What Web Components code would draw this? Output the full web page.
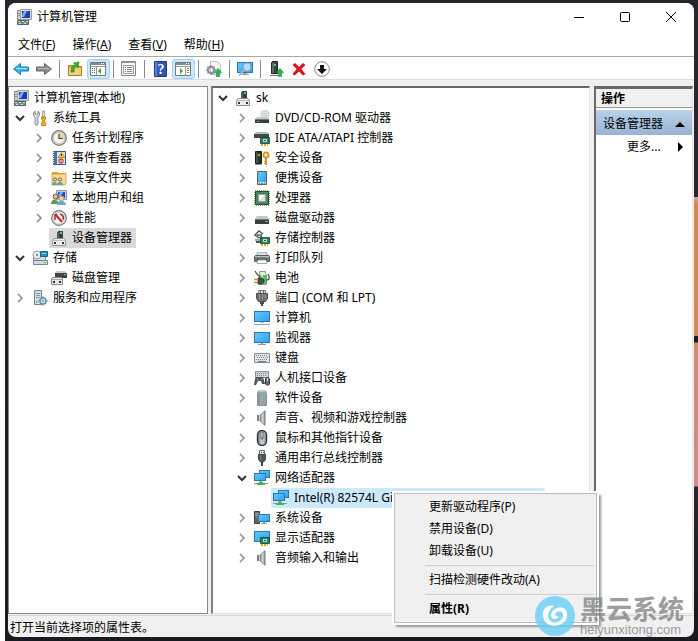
<!DOCTYPE html>
<html lang="zh-CN">
<head>
<meta charset="utf-8">
<title>计算机管理</title>
<style>
    html, body { height: 100%; }
    body {
        margin: 0;
        box-sizing: border-box;
        padding: 0 0 0 5px;
        display: flex;
        background: #fff;
        color: #000;
        font: 12px/20px "Noto Sans", "Noto Sans CJK SC", sans-serif;
    }
</style>
</head>
<body>
<mmc-desktop>
    <mmc-window heading="计算机管理">
        <mmc-menubar slot="menu"></mmc-menubar>
        <mmc-toolbar slot="tools"></mmc-toolbar>

        <mmc-pane slot="left" kind="line">
            <mmc-node icon="console" label="计算机管理(本地)" root></mmc-node>
            <mmc-node icon="tools" label="系统工具" state="open">
                <mmc-node icon="clock" label="任务计划程序" state="closed"></mmc-node>
                <mmc-node icon="events" label="事件查看器" state="closed"></mmc-node>
                <mmc-node icon="shared" label="共享文件夹" state="closed"></mmc-node>
                <mmc-node icon="users" label="本地用户和组" state="closed"></mmc-node>
                <mmc-node icon="perf" label="性能" state="closed"></mmc-node>
                <mmc-node icon="device" label="设备管理器" selected="grey"></mmc-node>
            </mmc-node>
            <mmc-node icon="storage" label="存储" state="open">
                <mmc-node icon="diskmgmt" label="磁盘管理"></mmc-node>
            </mmc-node>
            <mmc-node icon="services" label="服务和应用程序" state="closed"></mmc-node>
        </mmc-pane>

        <mmc-pane slot="center" kind="sunken">
            <mmc-node icon="device" label="sk" state="open">
                <mmc-node icon="dvd" label="DVD/CD-ROM 驱动器" state="closed"></mmc-node>
                <mmc-node icon="ide" label="IDE ATA/ATAPI 控制器" state="closed"></mmc-node>
                <mmc-node icon="security" label="安全设备" state="closed"></mmc-node>
                <mmc-node icon="portable" label="便携设备" state="closed"></mmc-node>
                <mmc-node icon="cpu" label="处理器" state="closed"></mmc-node>
                <mmc-node icon="disk" label="磁盘驱动器" state="closed"></mmc-node>
                <mmc-node icon="storagectl" label="存储控制器" state="closed"></mmc-node>
                <mmc-node icon="printer" label="打印队列" state="closed"></mmc-node>
                <mmc-node icon="battery" label="电池" state="closed"></mmc-node>
                <mmc-node icon="port" label="端口 (COM 和 LPT)" state="closed"></mmc-node>
                <mmc-node icon="computer" label="计算机" state="closed"></mmc-node>
                <mmc-node icon="monitor" label="监视器" state="closed"></mmc-node>
                <mmc-node icon="keyboard" label="键盘" state="closed"></mmc-node>
                <mmc-node icon="hid" label="人机接口设备" state="closed"></mmc-node>
                <mmc-node icon="software" label="软件设备" state="closed"></mmc-node>
                <mmc-node icon="speaker" label="声音、视频和游戏控制器" state="closed"></mmc-node>
                <mmc-node icon="mouse" label="鼠标和其他指针设备" state="closed"></mmc-node>
                <mmc-node icon="usb" label="通用串行总线控制器" state="closed"></mmc-node>
                <mmc-node icon="network" label="网络适配器" state="open">
                    <mmc-node icon="network" label="Intel(R) 82574L Gigabit Network Connection" selected="blue"></mmc-node>
                </mmc-node>
                <mmc-node icon="system" label="系统设备" state="closed"></mmc-node>
                <mmc-node icon="display" label="显示适配器" state="closed"></mmc-node>
                <mmc-node icon="speaker" label="音频输入和输出" state="closed"></mmc-node>
            </mmc-node>
        </mmc-pane>

        <mmc-actions slot="right" heading="操作" group="设备管理器">更多...</mmc-actions>
        <span slot="status">打开当前选择项的属性表。</span>

        <mmc-context-menu slot="overlay">
            <button type="button">更新驱动程序(P)</button>
            <button type="button">禁用设备(D)</button>
            <button type="button">卸载设备(U)</button>
            <hr>
            <button type="button">扫描检测硬件改动(A)</button>
            <hr>
            <button type="button"><b>属性(R)</b></button>
        </mmc-context-menu>
    </mmc-window>
    <mmc-watermark site="heiyunxitong.com">黑云系统</mmc-watermark>
</mmc-desktop>

<script>
// shared pieces, reused by several icons
const board = `<path fill="#2f8062" stroke="#0d4a33" stroke-width=".8" d="M6.500 7.500h9v6h-9z"/><path fill="#b9dccb" d="M9 9h4v3H9z"/><path fill="#2a4d40" d="M10 10h2v1h-2z"/><path fill="#e8a11c" d="M7 14h2v2H7zM10 14h2v2h-2zM13 14h1v2h-1z"/>`;
const screen = (x, y, w, h) => `<rect x="${x}.5" y="${y}.5" width="${w}" height="${h}" fill="url(#blue)" stroke="#2c78ad"/>`;
const gear = (x, y) => `<g transform="translate(${x} ${y})"><circle r="3" fill="none" stroke="#8a8f93" stroke-width="2"/><path stroke="#8a8f93" stroke-width="1.5" d="M0-5v2M0 5V3M-5 0h2M5 0H3M-3.500-3.500l1 1M3.500 3.500l-1-1M-3.500 3.500l1-1M3.500-3.500l-1 1"/></g>`;
const upArrow = `<path fill="#21b84c" stroke="#0c8a32" stroke-width=".6" d="M12 7.500l3.500 4h-2v4h-3v-4h-2z"/>`;
const paneFrame = `<path fill="#fff" stroke="#777" d="M.5 1.500h15v13H.5z"/><path fill="#8a8a8a" d="M1 2h14v2H1z"/><path fill="#fff" d="M11 2h1v1h-1zM13 2h1v1h-1z"/><path stroke="#999" d="M1 5.500h14"/>`;

const ICONS = {
    console: `<path fill="#d6d6d1" stroke="#85857e" d="M1.500 1.500h4v9h-4z"/><path stroke="#999" d="M2 4.500h3M2 6.500h3"/><path fill="#d9dad6" stroke="#a0a09b" d="M4.500.5h11v10h-11z"/><path fill="#1740b8" d="M6 2h8v7H6z"/><path fill="#7da7f4" d="M8 2h3L8 8H6V6z"/><path fill="#aab2b8" d="M8 11h5l1 1H7z"/><path fill="#7b8a93" stroke="#55626a" d="M1.500 11.500h11v4h-11z"/><path fill="#d5dde1" d="M2 12h2v1H2zM6 12h2v1H6zM10 12h2v1h-2zM3 14h2v1H3zM8 14h2v1H8z"/>`,
    tools: `<path fill="#d7dadc" stroke="#777" stroke-width=".8" d="M3 1L1.500 3v2.500L3 7v7c0 1.500 3 1.500 3 0V7l1.500-1.500V3L6 1v3H3z"/><path fill="#ddd" stroke="#888" stroke-width=".7" d="M10.500 1h2v6h-2z"/><path fill="#f4ad13" stroke="#aa6d08" stroke-width=".7" d="M9.500 7h4v2l-.8 1v2l1 1v2.500h-4.200V13l1-1v-2l-1-1z"/>`,
    clock: `<circle cx="8" cy="8" r="7.300" fill="#ddd6c7" stroke="#777" stroke-width="1.200"/><circle cx="8" cy="8" r="5.500" fill="#f8f5ea" stroke="#aaa" stroke-width=".5"/><path fill="#e9cf90" d="M8 8V3a5 5 0 0 1 5 5z"/><path fill="none" stroke="#3a4657" stroke-width="1.200" d="M8 4v4.500h4"/>`,
    events: `<path fill="#d9e4ee" stroke="#3c5d83" d="M2.500 1.500h12v13h-12z"/><path fill="#4777a4" d="M3 2h3v12H3z"/><path stroke="#eee" stroke-width="2" stroke-dasharray="1 1" d="M2 2v12"/><path fill="#fbc52f" stroke="#b07d05" stroke-width=".7" d="M10.500 2.500l3.500 5H7z"/><path stroke="#333" d="M10.500 4v2"/><circle cx="10" cy="11" r="2.700" fill="#d84745"/><path stroke="#fff" d="M8.500 11h3"/>`,
    shared: `<path fill="#d9a33a" d="M1 2h6l1 1h7v11H1z"/><path fill="#f6da8f" stroke="#c19337" stroke-width=".7" d="M1 4h11l3-1v11l-2 1H1z"/><path fill="#4ba8ac" d="M1 15c0-4 5-4 5 0zM6 15c0-4 6-4 6 0z"/><circle cx="4" cy="9.500" r="1.600" fill="#f1ddbb" stroke="#68482b" stroke-width=".8"/><circle cx="9" cy="9.500" r="1.600" fill="#f1ddbb" stroke="#68482b" stroke-width=".8"/>`,
    users: `<path fill="#c7ced7" stroke="#8e99a8" d="M5.500.5h10v9h-10z"/><path fill="#2352c4" d="M7 2h7v6H7z"/><path fill="#82aef6" d="M9 2h3L9 7H7z"/><path fill="#5d9a54" d="M0 14c0-6 7-6 8 0z"/><path fill="#6ba5df" d="M6 15c0-6 8-6 9 0z"/><circle cx="4.500" cy="6.500" r="2.400" fill="#e5c19a" stroke="#725035"/><circle cx="10.500" cy="8.500" r="2.400" fill="#edcfad" stroke="#c1a44f"/>`,
    perf: `<circle cx="8" cy="8" r="7.300" fill="#eee" stroke="#777" stroke-width="1.200"/><circle cx="8" cy="8" r="5.500" fill="#fff" stroke="#bbb" stroke-width=".5"/><path fill="none" stroke="#b6262b" stroke-width="2" d="M4.500 4.500L11 12"/><path fill="none" stroke="#b6262b" stroke-width="1.500" d="M4 10V5l2-1M9 4c3 1 4 3 3 6"/>`,
    device: `<path fill="#3b3f40" d="M7 1h5v7H7zM6 2h1v6H6z"/><path fill="#575c5e" d="M6 2h2v6H6z"/><path fill="#3de550" d="M9 2h2v2H9z"/><path fill="#eceded" stroke="#8f9496" d="M1.500 10.500L3 8.500h10l1.500 2v5h-13z"/><path fill="#bfc3c4" d="M2 10h12v1H2z"/><path fill="#333" d="M3 12h2v2H3zM11 12h2v2h-2z"/>`,
    storage: `<path fill="#d8dddf" stroke="#808a8f" d="M1.500 3.500h12v11h-12z"/><circle cx="5" cy="5" r="4" fill="#e9ecee" stroke="#949fa5"/><circle cx="5" cy="5" r="1.200" fill="#839198"/><path fill="#2d91bf" stroke="#16678e" d="M8.500 1.500h7v5h-7z"/><path fill="#86d5ed" d="M10 3h4v1h-4z"/><path fill="#d3d8da" stroke="#7d878c" d="M1.500 10.500h14v4h-14z"/><path fill="#32cf42" d="M12 12h2v1h-2z"/>`,
    diskmgmt: `<path fill="#c9cccd" d="M6 1h8l2 2H4z"/><path fill="#424546" d="M4 3h12v5H4z"/><path fill="#37dd4c" d="M13 4h2v1h-2z"/><path fill="#e6e8e8" stroke="#84898b" d="M.5 8.500L2 7.500h8l1.500 1v6H.5z"/><path stroke="#aaa" d="M1 9.500h10"/><path fill="#333" d="M2 11h2v2H2zM8 11h2v2H8z"/>`,
    services: `<path fill="#d5dde2" stroke="#738591" d="M2.500.5h7v14h-7z"/><path fill="#8598a4" d="M4 3h4v1H4zM4 5h4v1H4zM4 7h4v1H4z"/><path fill="#3cbd50" d="M4 11h1v2H4z"/><g transform="translate(11 11)"><circle r="3" fill="#e0eef9" stroke="#668ba8" stroke-width="1.500"/><path stroke="#668ba8" d="M0-5v2M0 5V3M-5 0h2M5 0H3M-3-3l1 1M3 3L2 2M-3 3l1-1M3-3L2-2"/><circle r="1" fill="#668ba8"/></g>`,
    dvd: `<circle cx="11" cy="4.500" r="4" fill="#dce3e8" stroke="#b6c0c7" stroke-width=".8"/><circle cx="11" cy="4.500" r="1.200" fill="#fff" stroke="#9ea8ad" stroke-width=".6"/><path fill="#c3c7c9" d="M3 7h10l2 2H1z"/><path fill="#393c3e" d="M1 9h14v4H1z"/><path fill="#777" d="M1 9h14v1H1z"/><path fill="#38e04a" d="M3 11h2v1H3z"/>`,
    ide: `<path fill="#b6babd" d="M2 2h11l2 2H0z"/><path fill="#45494a" d="M0 4h15v4H0z"/>${board}`,
    security: `<path fill="#303334" stroke="#191b1c" d="M1.500 1.500h6v12h-6z"/><path fill="#4c5051" d="M2 2h2v11H2z"/><path fill="#43e954" d="M4 4h2v2H4z"/><path fill="#9da0a1" d="M1 14h7v1H1z"/><circle cx="12" cy="5" r="2.600" fill="#fff1ba" stroke="#d79224" stroke-width="1.800"/><path stroke="#d79224" stroke-width="2" d="M12 8v7"/><path stroke="#d79224" d="M10 11.500h2M10 13.500h2"/>`,
    portable: `<path fill="#cbd1d5" stroke="#566069" d="M3.500 1.500h9v13h-9z"/><path fill="url(#blue)" d="M4 2h8v10H4z"/><path fill="#70777b" d="M5 13h1v1H5zM7 13h2v1H7zM10 13h1v1h-1z"/>`,
    cpu: `<path fill="none" stroke="#b29b4d" stroke-width="2" stroke-dasharray="1 1" d="M1 1h14v14H1z"/><path fill="#4c8068" stroke="#1c5740" d="M1.500 1.500h13v13h-13z"/><path fill="#dae0dd" stroke="#8fa69b" d="M4.500 4.500h7v7h-7z"/><path fill="#f3f6f4" d="M5 5h6L5 11z"/>`,
    disk: `<path fill="#c3c7c9" d="M3 6h10l2 3H1z"/><path fill="#3a3d3f" d="M1 9h14v5H1z"/><path fill="#777" d="M1 9h14v1H1z"/><path fill="#38e04a" d="M11 11h3v1h-3z"/>`,
    storagectl: `<path fill="none" stroke="#555" stroke-width="1.400" d="M9 4L5 1 1 5l4 3 3-2M3 5h5"/><path fill="#aaa" d="M1 9h6v2H1z"/><path fill="#555" d="M2 11h6v2H2z"/>${board}`,
    printer: `<path fill="#b0b9bf" d="M3 2h10l1 4H2z"/><path fill="#d9dfe3" d="M4 3h8v2H4z"/><path fill="#70787d" stroke="#565d61" d="M1.500 5.500h13a1 1 0 0 1 1 1v5H.5v-5z"/><path fill="#b9c2c7" d="M1 6h14v1H1z"/><path fill="#36d94a" d="M12 7h2v1h-2z"/><path fill="#303437" d="M3 9h10v2H3z"/><path fill="#fff" stroke="#9caab3" d="M4 10h8l1 3.500H3z"/>`,
    battery: `<path fill="#e8ece7" stroke="#8a9b8d" d="M5.500 3.500V1.500h6v2l1 1v10h-7z"/><path fill="#52c84a" d="M6 5h6v9H6z"/><path fill="#a5eb94" d="M7 5h2v9H7z"/><path fill="none" stroke="#555" stroke-width="1.300" d="M1 1l2 3 3 3M12 10c5 0 3-4 2-6"/><path fill="#4f5253" stroke="#272a2a" stroke-width=".8" d="M4 8h4l2 2v2l-2 2H4z"/><path stroke="#cd9b31" stroke-width="1.500" d="M0 9.500h4M0 12.500h4"/>`,
    port: `<path fill="#dadddd" stroke="#787c7e" d="M4.500 1.500v-1h7v3h-7z"/><path stroke="#777" d="M6.500 0v3M9.500 0v3"/><path fill="#6d7173" stroke="#494d4f" d="M2.500 3.500h11v5l-2 3h-7l-2-3z"/><path stroke="#999" d="M5.500 4v5M8.500 4v5M11.500 4v4"/><path fill="#4b4f51" d="M6 12h4v2H9v2H7v-2H6z"/>`,
    computer: `${screen(0, 1, 15, 10)}<path fill="#b7c6ce" d="M6 12h4v1H6z"/><path fill="#8fa6b2" d="M0 14h16v1H0z"/>`,
    monitor: `${screen(0, 2, 15, 10)}<path fill="#8297a3" d="M7 13h2v1h3v1H4v-1h3z"/>`,
    keyboard: `<path fill="#e1e5e7" stroke="#858e93" d="M.5 3.500h15v9H.5z"/><path stroke="#7b858b" stroke-dasharray="1 1" d="M2 5.500h12M3 7.500h11M2 9.500h12"/><path stroke="#777" d="M4 11.500h8"/>`,
    hid: `<path fill="#d1d5d7" stroke="#899195" d="M1.500 1.500h13v6h-13z"/><path stroke="#7c8489" stroke-dasharray="1 1" d="M3 3.500h10M3 5.500h10"/><path fill="#4b5154" d="M2 7h7l2 7H8l-1-3H4l-2 4H0l1-6z"/><circle cx="3.500" cy="9.500" r="1" fill="#5db6e8"/><circle cx="7.500" cy="9.500" r="1" fill="#ec633c"/><path fill="#6b7174" stroke="#363b3e" d="M11.500 9l1-1.500h2l1 1.500v5l-1 1h-2l-1-1z"/><path stroke="#ddd" d="M13.500 8v3"/>`,
    software: `<path fill="#9aa3a8" stroke="#868f95" d="M3.500 3.500l1-2.500h7l1 2.500v12h-9z"/><path fill="#c5cbce" d="M5 1h6v1H5z"/><path fill="#8b959b" d="M4 4h2v11H4z"/><path fill="#42c8e5" d="M8 5h2v2H8z"/>`,
    speaker: `<path fill="#777c80" d="M3 5h2v6H3z"/><path fill="url(#metal)" stroke="#7b8084" stroke-width=".7" d="M6 5l5-4.500v15L6 11z"/><path fill="#b4b9bc" d="M11 1h1v14h-1z"/>`,
    mouse: `<rect x="3.500" y=".5" width="9" height="15" rx="4.500" fill="url(#metal)" stroke="#30363a" stroke-width="1.400"/><path fill="#fff" stroke="#3e474d" stroke-width=".8" d="M7 2h2v6H7z"/><path stroke="#4c545a" d="M8 8v2"/>`,
    usb: `<path fill="#e0e2e2" stroke="#696f72" d="M5.500.5h5v4h-5z"/><path fill="#555" d="M7 2h1v1H7zM9 2h1v1H9z"/><path fill="#505557" stroke="#3b4042" d="M4.500 4.500h7v5l-2 2.500h-3l-2-2.500z"/><path stroke="#7b8285" d="M6.500 5v5"/><path fill="#404548" d="M7 12h2v4H7z"/>`,
    network: `${screen(5, 0, 10, 7)}${screen(0, 3, 11, 7)}<path fill="#9fb2bd" d="M5 11h3v1H5z"/><path fill="#36bd4a" d="M5 12h4v1h2v2H3v-2h2z"/><path fill="#8c9ba3" d="M0 13h3v1H0zM11 13h3v1h-3z"/>`,
    system: `<path fill="#64696c" stroke="#383d40" d="M.5 1.500h5v12h-5z"/><path stroke="#aaa" d="M1 3.500h4M1 5.500h4"/><path fill="#39d34e" d="M2 7h1v1H2z"/>${screen(4, 4, 11, 7)}<path fill="#8ba2b0" d="M9 12h2v1h2v1H7v-1h2z"/>`,
    display: `${screen(0, 1, 15, 10)}${board}`,

    back: `<path fill="#35b5ee" stroke="#147bb5" stroke-linejoin="round" d="M.5 8l7-5.500v3.500h8v4h-8v3.500z"/><path stroke="#a9e2fb" d="M3 7.500h11"/>`,
    forward: `<path fill="#8e8e8e" stroke="#686868" stroke-linejoin="round" d="M15.500 8l-7-5.500v3.500h-8v4h8v3.500z"/><path stroke="#bbb" d="M2 7.500h11"/>`,
    folderup: `<path fill="#d9a747" stroke="#b07e27" d="M1.500 4.500h5l2 1h6v9h-13z"/><path fill="#f3ce7d" d="M2 7h12v7H2z"/><path fill="#3cb82c" stroke="#268a1b" stroke-width=".7" d="M4 11c0-4 1-6 4-7.500L6.500 2 12 1l-1 5.500L9.500 5C7 6 7 8 7 11z"/>`,
    showtree: `${paneFrame}<path stroke="#999" d="M6.500 5v10"/><path fill="#38729a" d="M2 7h1v1H2zM4 7h1v1H4zM2 9h1v1H2zM4 9h1v1H4zM2 11h1v1H2zM4 11h1v1H4z"/><path fill="#35a536" d="M11 7v6l-3-3z"/>`,
    showpane: `${paneFrame}<path stroke="#999" d="M10.500 5v10"/><path fill="#35a536" d="M5 7v6l3-3z"/><path fill="#777" d="M12 7h2v1h-2zM12 9h2v1h-2zM12 11h2v1h-2z"/>`,
    props: `<path fill="#fff" stroke="#888" d="M.5.5h14v14H.5z"/><path fill="#999" d="M1 1h13v1H1z"/><path fill="#f5f5f5" stroke="#999" d="M2.500 4.500h10v8h-10z"/><path fill="#888" d="M4 6h1v1H4zM6 6h5v1H6zM4 8h1v1H4zM6 8h5v1H6zM4 10h1v1H4zM6 10h5v1H6z"/>`,
    help: `<path fill="#3155b5" stroke="#223d87" d="M2.500.5h12v15h-12z"/><path fill="#6383d2" d="M3 1h2v14H3z"/><text x="9" y="13" fill="#fff" font-family="Liberation Serif,serif" font-size="14" font-weight="bold" text-anchor="middle">?</text>`,
    update: `<path fill="#fafafa" stroke="#bbb" d="M4.500.5h7l3 3v10h-10z"/><path fill="#ddd" d="M11 1v3h3z"/>${gear(5, 9)}${upArrow}`,
    scan: `${screen(0, 1, 15, 10)}<path fill="#91a6b1" d="M6 12h4v1h2v1H4v-1h2z"/><circle cx="10" cy="6" r="4" fill="#c8ebfb" fill-opacity=".8" stroke="#8ba5b5" stroke-width="1.200"/><path stroke="#9db4c1" stroke-width="1.800" d="M7 9l-5 5.500"/>`,
    enable: `<path fill="#3b3f40" stroke="#222526" d="M3.500 1.500l1-1h5v12h-6z"/><path fill="#646a6c" d="M4 2h2v10H4z"/><path fill="#41e354" d="M6 3h2v2H6z"/><path fill="#777" d="M2 14h8v1H2z"/>${upArrow}`,
    remove: `<path fill="#dd1119" d="M4 2l4 4 4-4 2.500 2-4.200 4 4.200 5-2.500 1.500L8 10.500l-4.500 4L1.500 13l4.200-5-4.200-4z"/>`,
    disable: `<circle cx="8" cy="8" r="7.300" fill="#fff" stroke="#888"/><path fill="#111" d="M6 4h4v4h3l-5 5-5-5h3z"/>`
};

// draws one 16px icon by name
class MmcIcon extends HTMLElement {
    constructor() {
        super();
        this.attachShadow({ mode: 'open' });
    }

    static get observedAttributes() {
        return ['name'];
    }

    attributeChangedCallback() {
        this.render();
    }

    render() {
        this.shadowRoot.innerHTML = `
            <style>
                :host { display: block; flex: none; width: 16px; height: 16px; }
                svg { display: block; }
            </style>
            <svg width="16" height="16" viewBox="0 0 16 16" fill="none" aria-hidden="true">
                <defs>
                    <linearGradient id="blue" x2="1" y2="1"><stop stop-color="#66c9ff"/><stop offset="1" stop-color="#2fa0ee"/></linearGradient>
                    <linearGradient id="metal"><stop stop-color="#6f777d"/><stop offset=".5" stop-color="#d2d7da"/><stop offset="1" stop-color="#858d92"/></linearGradient>
                </defs>
                ${ICONS[this.getAttribute('name')] || ''}
            </svg>
        `;
    }
}
customElements.define('mmc-icon', MmcIcon);

// tree row, with its children in the slot
class MmcNode extends HTMLElement {
    constructor() {
        super();
        this.attachShadow({ mode: 'open' });
    }

    connectedCallback() {
        const label = this.getAttribute('label');
        const state = this.getAttribute('state');
        const open = state === 'open';
        const arrow = open ? 'M4 6l4 4 4-4' : 'M6 4l4 4-4 4';
        const twisty = state
            ? `<button class="twisty" type="button" aria-label="${label}" aria-expanded="${open}"><svg width="16" height="16" fill="none" stroke="${open ? '#333' : '#8c8c8c'}" stroke-width="${open ? 2 : 1.5}"><path d="${arrow}"/></svg></button>`
            : '<span class="twisty"></span>';

        this.shadowRoot.innerHTML = `
            <style>
                :host { display: block; }
                .row { display: flex; align-items: center; height: 20px; white-space: nowrap; }
                .twisty { flex: none; width: 16px; height: 16px; margin: 0 2px 0 var(--lead, 3px); padding: 0; border: 0; background: none; }
                :host([root]) .twisty { width: 0; margin: 0 2px 0 0; }
                svg { display: block; }
                .label { display: flex; align-items: center; gap: 5px; height: 20px; padding: 0 4px 0 2px; }
                :host([selected="grey"]) .label { background: #d9d9d9; }
                :host([selected="blue"]) .label { background: #cce8ff; border-radius: 2px; }
                .kids { padding-left: 19px; }
            </style>
            <div class="row">${twisty}<span class="label"><mmc-icon name="${this.getAttribute('icon')}"></mmc-icon><span>${label}</span></span></div>
            <div class="kids"><slot></slot></div>
        `;
    }
}
customElements.define('mmc-node', MmcNode);

class MmcPane extends HTMLElement {
    constructor() {
        super();
        this.attachShadow({ mode: 'open' });
        this.shadowRoot.innerHTML = `
            <style>
                :host { display: block; box-sizing: border-box; min-width: 0; overflow: hidden; background: #fff; }
                :host([kind="line"]) { border: 1px solid #828790; padding-top: 1px; }
                :host([kind="sunken"]) { --lead: 2px; border: solid; border-width: 2px 1px 1px 2px; border-color: #696969 #e3e3e3 #e3e3e3 #828282; }
            </style>
            <slot></slot>
        `;
    }
}
customElements.define('mmc-pane', MmcPane);

class MmcMenubar extends HTMLElement {
    constructor() {
        super();
        this.attachShadow({ mode: 'open' });
        const menus = [['文件', 'F'], ['操作', 'A'], ['查看', 'V'], ['帮助', 'H']];
        this.shadowRoot.innerHTML = `
            <style>
                :host { display: flex; gap: 17px; height: 25px; padding: 0 10px; border-bottom: 1px solid #a8a8a8; }
                button { padding: 3px 0 0; border: 0; background: none; color: inherit; font: inherit; }
                u { text-underline-offset: 1px; }
            </style>
            ${menus.map(([name, key]) => `<button type="button">${name}(<u>${key}</u>)</button>`).join('')}
        `;
    }
}
customElements.define('mmc-menubar', MmcMenubar);

class MmcToolbar extends HTMLElement {
    constructor() {
        super();
        this.attachShadow({ mode: 'open' });
        const items = [
            ['back', '后退'], ['forward', '前进'], null,
            ['folderup', '向上'], ['showtree', '显示/隐藏控制台树', true], null,
            ['props', '属性'], null,
            ['help', '帮助'], ['showpane', '显示/隐藏操作窗格', true], null,
            ['update', '更新驱动程序'], null,
            ['scan', '扫描检测硬件改动'], null,
            ['enable', '启用设备'], ['remove', '卸载设备'], ['disable', '禁用设备']
        ];
        this.shadowRoot.innerHTML = `
            <style>
                :host { display: flex; align-items: center; height: 20px; padding: 2px 0 0 2px; border-bottom: 1px solid #dadada; }
                button { box-sizing: border-box; width: 23px; height: 20px; padding: 0 3px; border: 0; background: none; }
                button[aria-pressed] { padding: 0 2px; border: 1px solid #99d1ff; border-radius: 3px; background: #cce8ff; }
                i { width: 1px; height: 18px; margin: 0 4px 0 3px; background: #8a8a8a; }
            </style>
            ${items.map(item => item
                ? `<button type="button" aria-label="${item[1]}"${item[2] ? ' aria-pressed="true"' : ''}><mmc-icon name="${item[0]}"></mmc-icon></button>`
                : '<i></i>').join('')}
        `;
    }
}
customElements.define('mmc-toolbar', MmcToolbar);

class MmcActions extends HTMLElement {
    constructor() {
        super();
        this.attachShadow({ mode: 'open' });
    }

    connectedCallback() {
        this.shadowRoot.innerHTML = `
            <style>
                :host { display: block; box-sizing: border-box; border: solid; border-width: 3px 1px 1px 2px; border-color: #696969 #e3e3e3 #e3e3e3 #696969; background: #fff; }
                h2 { margin: 0 0 2px; padding: 0 5px; height: 18px; line-height: 20px; border-bottom: 1px solid #999; background: #f0f0f0; font-size: 12px; }
                button { display: flex; align-items: center; justify-content: space-between; box-sizing: border-box; width: 100%; height: 25px; padding: 2px 7px 0; border: 0; background: none; color: inherit; font: inherit; white-space: nowrap; }
                .group { background: linear-gradient(#b9d1ea, #99b4d1); }
                .more { height: 24px; padding: 0 7px 0 31px; }
                svg { flex: none; }
            </style>
            <h2>${this.getAttribute('heading')}</h2>
            <button class="group" type="button">${this.getAttribute('group')}<svg width="10" height="10"><path d="M0 8l5-5 5 5z"/></svg></button>
            <button class="more" type="button"><slot></slot><svg width="8" height="10"><path d="M1 0l5 5-5 5z"/></svg></button>
        `;
    }
}
customElements.define('mmc-actions', MmcActions);

class MmcContextMenu extends HTMLElement {
    constructor() {
        super();
        this.attachShadow({ mode: 'open' });
        this.shadowRoot.innerHTML = `
            <style>
                :host {
                    display: block;
                    box-sizing: border-box;
                    padding: 2px;
                    border: 1px solid #bcbcbc;
                    background: #f0f0f0;
                    box-shadow: 0 0 0 2px #fff, 3px 3px 2px 1px #999;
                }
                ::slotted(button) { display: block; width: 100%; height: 22px; padding: 0 32px; border: 0; background: none; color: inherit; font: inherit; line-height: 20px; text-align: left; white-space: nowrap; }
                ::slotted(hr) { height: 1px; margin: 3px 0 3px 28px; border: 0; background: #d0d0d0; }
            </style>
            <slot></slot>
        `;
    }
}
customElements.define('mmc-context-menu', MmcContextMenu);

class MmcWindow extends HTMLElement {
    constructor() {
        super();
        this.attachShadow({ mode: 'open' });
    }

    connectedCallback() {
        this.shadowRoot.innerHTML = `
            <style>
                :host { position: relative; flex: 1; min-width: 0; display: flex; flex-direction: column; border-radius: 8px; background: #f0f0f0; }
                .top { border-radius: 8px 8px 0 0; background: #fff; }
                header { display: flex; align-items: center; height: 28px; padding-left: 8px; }
                h1 { flex: 1; margin: 0 0 0 5px; font-size: 12px; line-height: 22px; font-weight: normal; }
                header button { width: 46px; height: 28px; padding: 0 15px; border: 0; background: none; }
                header svg { display: block; }
                main { flex: 1; display: grid; grid-template-columns: 200px minmax(0, 1fr) 99px; column-gap: 3px; padding: 6px 1px 1px 0; }
                footer { height: 21px; padding: 0 2px; border-top: 1px solid #d7d7d7; line-height: 23px; }
                slot[name="center"]::slotted(*) { margin-right: 1px; }
                slot[name="overlay"]::slotted(*) { position: absolute; left: 386px; top: 490px; width: 203px; }
            </style>
            <div class="top">
                <header>
                    <mmc-icon name="console"></mmc-icon>
                    <h1>${this.getAttribute('heading')}</h1>
                    <button type="button" aria-label="最小化"><svg width="16" height="16" stroke="#000"><path d="M3 8.500h10"/></svg></button>
                    <button type="button" aria-label="最大化"><svg width="16" height="16" stroke="#000" fill="none"><rect x="3.500" y="3.500" width="9" height="9" rx="1"/></svg></button>
                    <button type="button" aria-label="关闭"><svg width="16" height="16" stroke="#000"><path d="M3 3l10 10M13 3L3 13"/></svg></button>
                </header>
                <slot name="menu"></slot>
                <slot name="tools"></slot>
            </div>
            <main><slot name="left"></slot><slot name="center"></slot><slot name="right"></slot></main>
            <footer><slot name="status"></slot></footer>
            <slot name="overlay"></slot>
        `;
    }
}
customElements.define('mmc-window', MmcWindow);

class MmcWatermark extends HTMLElement {
    constructor() {
        super();
        this.attachShadow({ mode: 'open' });
    }

    connectedCallback() {
        this.shadowRoot.innerHTML = `
            <style>
                :host { position: absolute; right: 14px; bottom: 4px; display: flex; align-items: center; gap: 5px; color: #858585; opacity: .8; pointer-events: none; }
                .name { font: bold 26px/28px "Noto Sans CJK SC", sans-serif; }
                .site { font: 13px/15px "Liberation Sans", sans-serif; }
            </style>
            <svg width="40" height="40" viewBox="0 0 40 40" fill="none">
                <circle cx="20" cy="20" r="20" fill="#68d0f5"/>
                <path fill="#fff" d="M19 10c-7-2-12 3-11 10 1 8 9 12 16 9 7-2 9-8 8-12-1-5-6-7-10-5-6 2-7 7-5 10 2 2 6 1 7-2-3 1-5-1-3-3 2-3 7-2 7 2 0 5-5 8-10 7-6-1-7-10 1-16z"/>
            </svg>
            <div><div class="name"><slot></slot></div><div class="site">${this.getAttribute('site')}</div></div>
        `;
    }
}
customElements.define('mmc-watermark', MmcWatermark);

// dark wallpaper behind the window, with the lit strips at its right edge
class MmcDesktop extends HTMLElement {
    constructor() {
        super();
        this.attachShadow({ mode: 'open' });
        this.shadowRoot.innerHTML = `
            <style>
                :host {
                    position: relative;
                    flex: 1;
                    min-width: 0;
                    display: flex;
                    box-sizing: border-box;
                    min-height: 100%;
                    padding: 3px 4px 4px 3px;
                    background:
                        linear-gradient(#2a2630 197px, #c9a9a8 197px, #d3894b 204px, #d08a5a 336px, #1d1d24 336px, #1d1d24 342px, #cf8c72 343px, #c98e8e 486px, #2b2530 487px, #17171f) right / 4px 100% no-repeat,
                        linear-gradient(#24262e, #191b22);
                }
            </style>
            <slot></slot>
        `;
    }
}
customElements.define('mmc-desktop', MmcDesktop);
</script>
</body>
</html>
